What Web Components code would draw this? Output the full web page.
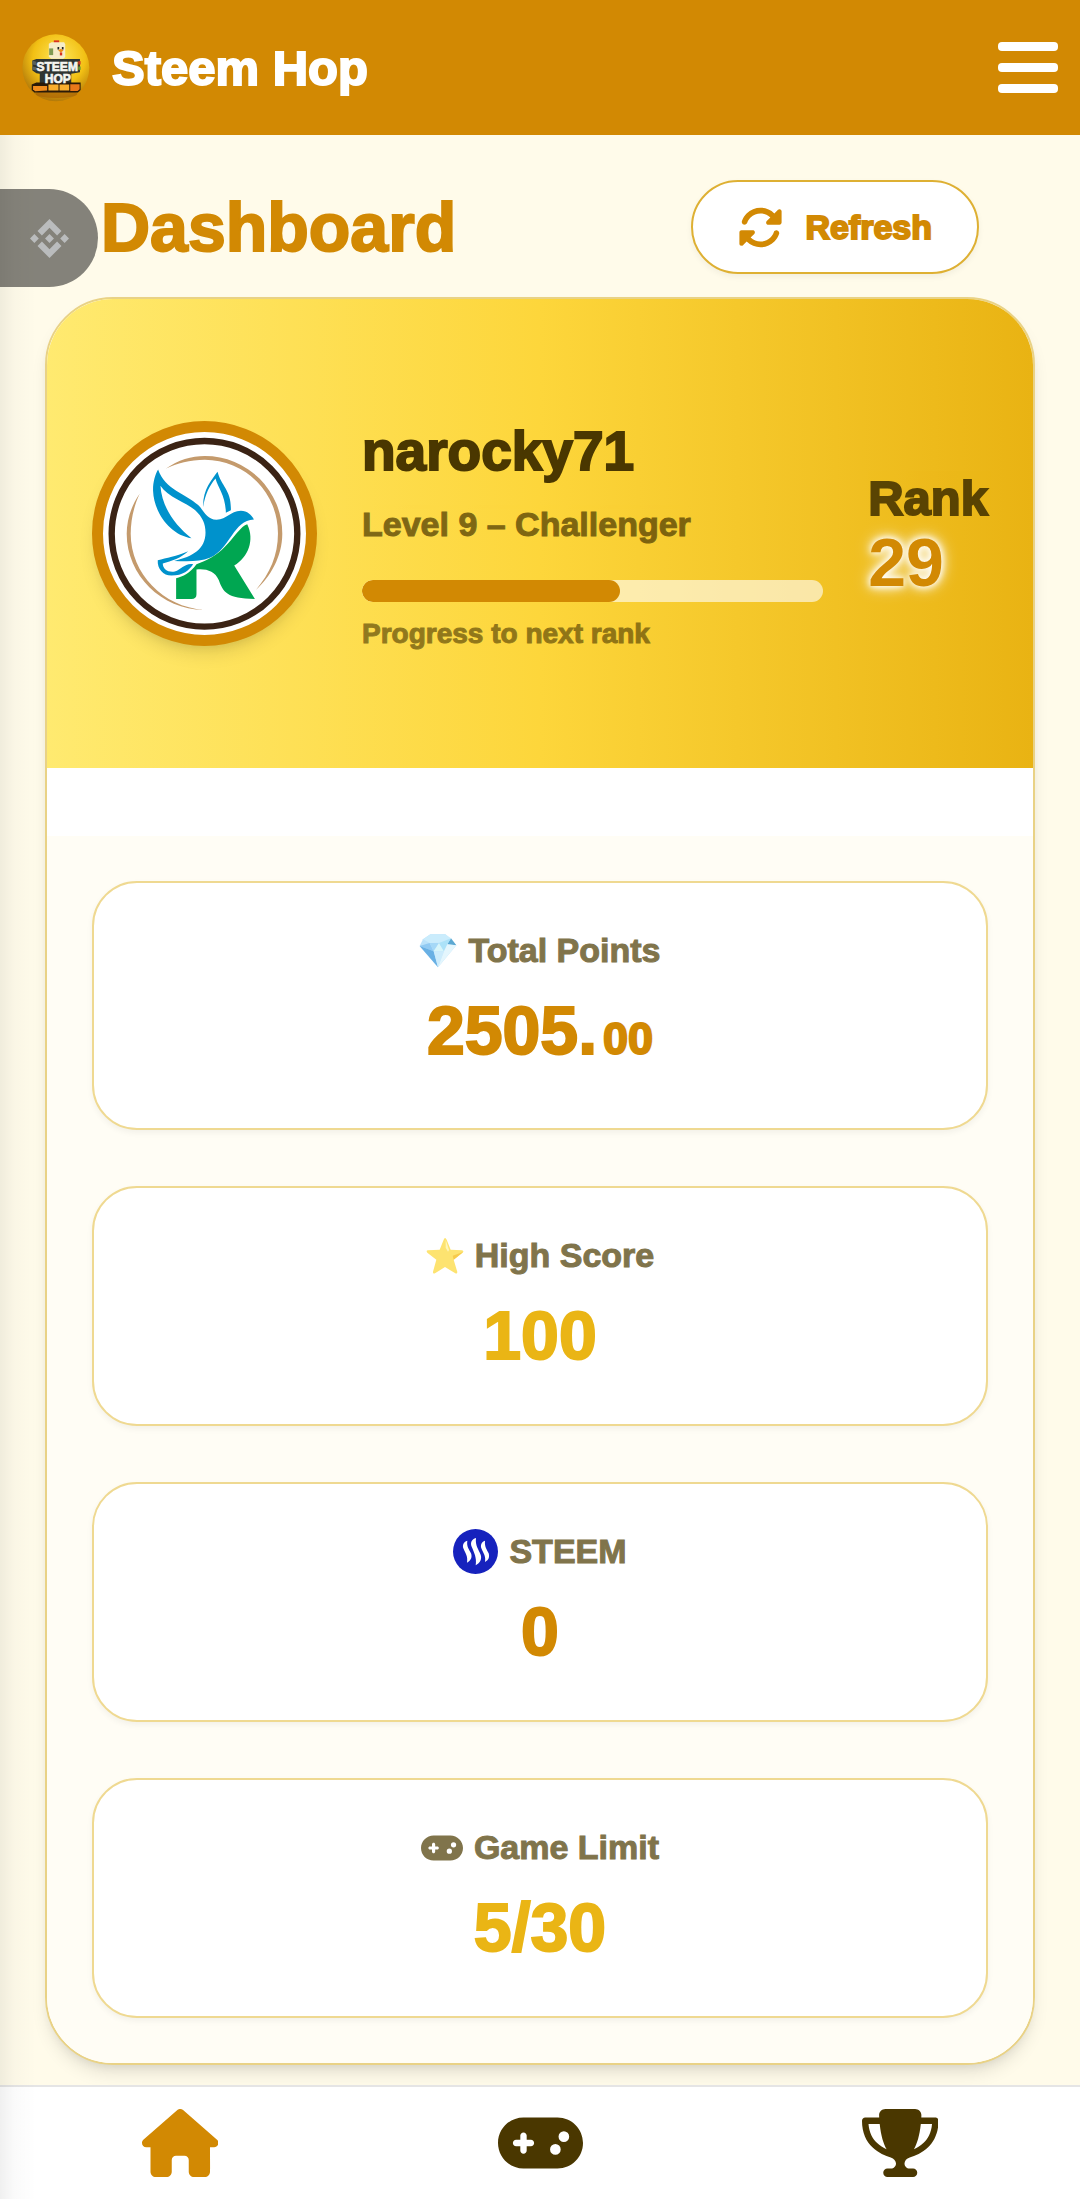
<!DOCTYPE html>
<html lang="en">
<head>
<meta charset="UTF-8">
<meta name="viewport" content="width=device-width, initial-scale=1">
<title>Steem Hop</title>
<style>
    :root {
        --primary: #d28903;
        --gold: #eab515;
        --dark: #4a3700;
        --page: #fffbea;
        --line: #efd991;
    }
    body {
        margin: 0;
        background: var(--page);
        color: var(--dark);
        font-family: "Liberation Sans", Arial, sans-serif;
        font-weight: 700;
    }
</style>
</head>
<body>
<hop-app>
    <hop-header slot="header" name="Steem Hop"></hop-header>
    <hop-drawer slot="drawer"></hop-drawer>
    <hop-title-bar>Dashboard</hop-title-bar>
    <hop-panel>
        <hop-profile slot="profile" progress="56">
            <hop-avatar slot="avatar"></hop-avatar>
            <span slot="name">narocky71</span>
            <span slot="level">Level 9 – Challenger</span>
            <span slot="rank">29</span>
        </hop-profile>
        <hop-stat icon="diamond" label="Total Points" value="2505." fraction="00"></hop-stat>
        <hop-stat icon="star" label="High Score" value="100" tone="gold"></hop-stat>
        <hop-stat icon="steem" label="STEEM" value="0"></hop-stat>
        <hop-stat icon="gamepad" label="Game Limit" value="5/30" tone="gold"></hop-stat>
    </hop-panel>
    <hop-nav slot="nav"></hop-nav>
</hop-app>

<script>
// Shared icon set, every icon is inline SVG
const ICONS = {
    refresh: `<svg viewBox="0 0 512 512"><path fill="currentColor" d="M142.9 142.9c62.2-62.2 162.7-62.5 225.3-1L327 183c-6.9 6.9-8.9 17.2-5.2 26.2s12.5 14.8 22.2 14.8H472c13.3 0 24-10.7 24-24V72c0-9.7-5.8-18.5-14.8-22.2s-19.3-1.7-26.2 5.2L413.4 96.6c-87.6-86.5-228.7-86.2-315.8 1C73.2 122 55.6 150.7 44.8 181.4c-5.9 16.7 2.9 34.9 19.5 40.8s34.9-2.9 40.8-19.5c7.7-21.8 20.2-42.3 37.8-59.8zM16 312V440c0 9.7 5.8 18.5 14.8 22.2s19.3 1.7 26.2-5.2l41.6-41.6c87.6 86.5 228.7 86.2 315.8-1c24.4-24.4 42.1-53.1 52.9-83.7c5.9-16.7-2.9-34.9-19.5-40.8s-34.9 2.9-40.8 19.5c-7.7 21.8-20.2 42.3-37.8 59.8c-62.2 62.2-162.7 62.5-225.3 1L185 329c6.9-6.9 8.9-17.2 5.2-26.2s-12.5-14.8-22.2-14.8H40c-13.3 0-24 10.7-24 24z"/></svg>`,
    home: `<svg viewBox="0 0 576 512"><path fill="currentColor" d="M575.8 255.5c0 18-15 32.1-32 32.1h-32l.7 160.2c0 2.7-.2 5.4-.5 8.1V472c0 22.1-17.9 40-40 40H392c-22.1 0-40-17.9-40-40V384c0-17.7-14.3-32-32-32H256c-17.7 0-32 14.3-32 32v88c0 22.1-17.9 40-40 40H104c-22.1 0-40-17.9-40-40V287.6H32c-18 0-32-14-32-32.1c0-9 3-17 10-24L266.4 8c7-7 15-8 22-8s15 2 21 7L564.8 231.5c8 7 12 15 11 24z"/></svg>`,
    gamepad: `<svg viewBox="0 0 640 512"><path fill="currentColor" fill-rule="evenodd" d="M192 64C86 64 0 150 0 256S86 448 192 448H448c106 0 192-86 192-192s-86-192-192-192H192zM496 168a40 40 0 1 1 0 80 40 40 0 1 1 0-80zM392 304a40 40 0 1 1 80 0 40 40 0 1 1 -80 0zM168 200c0-13.3 10.7-24 24-24s24 10.7 24 24v32h32c13.3 0 24 10.7 24 24s-10.7 24-24 24H216v32c0 13.3-10.7 24-24 24s-24-10.7-24-24V280H136c-13.3 0-24-10.7-24-24s10.7-24 24-24h32V200z"/></svg>`,
    trophy: `<svg viewBox="0 0 576 512"><path fill="currentColor" d="M400 0H176c-26.5 0-48.1 21.8-47.1 48.2c.2 5.3 .4 10.6 .7 15.8H24C10.7 64 0 74.7 0 88c0 92.6 33.5 157 78.5 200.7c44.3 43.1 98.3 64.8 138.1 75.8c23.4 6.5 39.4 26 39.4 45.6c0 20.9-17 37.9-37.9 37.9H192c-17.7 0-32 14.3-32 32s14.3 32 32 32H384c17.7 0 32-14.3 32-32s-14.3-32-32-32H357.9C337 448 320 431 320 410.1c0-19.6 15.9-39.2 39.4-45.6c39.9-11 93.9-32.7 138.2-75.8C542.5 245 576 180.6 576 88c0-13.3-10.7-24-24-24H446.4c.3-5.2 .5-10.4 .7-15.8C448.1 21.8 426.5 0 400 0zM48.9 112h84.4c9.1 90.1 29.2 150.3 51.9 190.6c-24.9-11-50.8-26.5-73.2-48.3c-32-31.1-58-76-63-142.3zM464.1 254.3c-22.4 21.8-48.3 37.3-73.2 48.3c22.7-40.3 42.8-100.5 51.9-190.6h84.4c-5.1 66.3-31.1 111.2-63 142.3z"/></svg>`,
    coin: `<svg viewBox="0 0 126.6 126.6"><path fill="currentColor" d="M38.7 53.2l24.6-24.6 24.6 24.6 14.3-14.3L63.3 0l-38.9 38.9zM0 63.3L14.3 49l14.3 14.3-14.3 14.3zM38.7 73.4L63.3 98l24.6-24.6 14.3 14.3-38.9 38.9-38.9-38.9zM98 63.3L112.3 49l14.3 14.3-14.3 14.3zM77.8 63.3L63.3 48.8 48.8 63.3l14.5 14.5z"/></svg>`,
    diamond: `<svg viewBox="0 0 114 114">
        <path fill="#9fd6f9" d="M34 7H79L112 40 57 106 2 42 12 22Z"/>
        <path fill="#b4e4fb" d="M34 7H79L96 19 75 32 32 33 12 22Z"/>
        <path fill="#63b5ee" d="M2 42L32 33 44 58Z"/>
        <path fill="#2b8fd9" d="M2 42L44 58 57 106Z"/>
        <path fill="#1684c0" d="M96 19L112 40 85 37Z"/>
        <path fill="#7fc8f4" d="M32 33H60L44 58Z"/>
        <path fill="#c7f1f8" d="M60 33L75 58H44Z"/>
        <path fill="#8ad7f6" d="M60 33L96 19 85 37 75 58Z"/>
        <path fill="#b9e5fc" d="M44 58H75L57 106Z"/>
        <path fill="#d9f3fd" d="M85 37L112 40 57 106 75 58Z"/>
    </svg>`,
    star: `<svg viewBox="0 0 114 114">
        <path fill="#fdd835" d="M57 3Q60 3 62 8L74 38 108 40Q115 42 110 47L83 68 94 105Q94 111 88 109L57 90 27 109Q20 112 21 104L31 68 4 47Q-1 41 6 40L41 38 53 8Q55 3 57 3Z"/>
        <path fill="#fff39a" d="M59 8L69 39 66 44 59 32Z"/>
        <path fill="#f4b400" d="M111 45L83 68 80 56Z"/>
    </svg>`,
    steem: `<svg viewBox="342 150 135 135">
        <circle cx="409.5" cy="217.5" r="67.5" fill="#1622bd"/>
        <g fill="#fff">
            <path d="M385 185C373 189 369 199 374 210C380 224 387 232 384 251C397 244 400 234 396 223C391 211 382 204 385 185Z"/>
            <path d="M411 177C398 181 393 191 398 203C405 220 414 236 410 259C424 251 429 240 425 227C419 211 408 200 411 177Z"/>
            <path d="M438 185C427 189 423 199 428 210C434 224 441 232 438 249C450 243 452 234 449 223C444 211 436 204 438 185Z"/>
        </g>
    </svg>`
};

class HopElement extends HTMLElement {
    constructor() {
        super();
        this.attachShadow({ mode: 'open' });
    }

    connectedCallback() {
        this.shadowRoot.innerHTML = this.render();
    }
}

class HopApp extends HopElement {
    render() {
        return `
            <style>
                :host {
                    display: flex;
                    flex-direction: column;
                    min-height: 100vh;
                    position: relative;
                }
                main {
                    flex: 1;
                    padding: 45px 45px 20px;
                }
            </style>
            <slot name="header"></slot>
            <slot name="drawer"></slot>
            <main><slot></slot></main>
            <slot name="nav"></slot>
        `;
    }
}

class HopHeader extends HopElement {
    render() {
        return `
            <style>
                :host {
                    display: block;
                    position: relative;
                    z-index: 3;
                    background: var(--primary);
                }
                header {
                    display: flex;
                    align-items: center;
                    gap: 22px;
                    height: 135px;
                    padding: 0 22px;
                    box-sizing: border-box;
                }
                a {
                    display: flex;
                    align-items: center;
                    gap: 22px;
                    color: #fff;
                    font-size: 49px;
                    line-height: 68px;
                    text-decoration: none;
                    -webkit-text-stroke: 2px currentColor;
                }
                a svg {
                    width: 68px;
                    height: 68px;
                    -webkit-text-stroke: 0;
                }
                button {
                    display: flex;
                    flex-direction: column;
                    gap: 12px;
                    margin-left: auto;
                    padding: 0;
                    border: 0;
                    background: none;
                }
                button i {
                    width: 60px;
                    height: 9px;
                    border-radius: 4px;
                    background: #fff;
                }
            </style>
            <header>
                <a href="#">
                    <svg viewBox="39 41 203 203" aria-hidden="true">
                        <defs>
                            <radialGradient id="ball" cx=".55" cy=".35" r=".65">
                                <stop offset="0" stop-color="#ffe75a"/>
                                <stop offset=".6" stop-color="#f2c014"/>
                                <stop offset="1" stop-color="#b37a0a"/>
                            </radialGradient>
                        </defs>
                        <circle cx="140" cy="142" r="100" fill="url(#ball)"/>
                        <ellipse cx="142" cy="220" rx="62" ry="12" fill="#a85f05" opacity=".6"/>
                        <path fill="#d9301e" d="M134 60h16v10h-16z"/>
                        <path fill="#f6ecc8" d="M119 70l8-4h38l3 6v38l-6 5h-36l-7-6z"/>
                        <path fill="#7f9a52" d="M120 84h12v20h-12z"/>
                        <path fill="#222" d="M145 80h5v7h-5zM158 80h5v7h-5z"/>
                        <path fill="#ef8a17" d="M147 90l8-5 8 5-8 6z"/>
                        <path fill="#d9301e" d="M152 96h7v9h-7z"/>
                        <path fill="#2f3532" d="M70 120l12-4h130v39l-26 5v32H92v-32l-10-2-12-8z"/>
                        <path fill="#59615c" d="M70 120l12 4v10l-12-2zM70 138l12 2v10l-12-2z"/>
                        <path fill="#cf3a20" d="M207 122h7v10h-7z"/>
                        <path fill="#5f9a35" d="M207 138h7v10h-7z"/>
                        <path fill="#2a1a08" d="M68 192l14-6h132v22l-8 8H76l-8-8z"/>
                        <path fill="#f08c1d" d="M72 196h42v14l-36 2-6-6z"/>
                        <path fill="#fbae2c" d="M118 192h30v18h-30zM151 192h29v18h-29z"/>
                        <path fill="#e9781a" d="M183 191h28v15l-6 5h-22z"/>
                        <g fill="#f4f4f0" stroke="#f4f4f0" stroke-width="2" font-size="36" text-anchor="middle">
                            <text x="144" y="152">STEEM</text>
                            <text x="146" y="187">HOP</text>
                        </g>
                    </svg>
                    <span>${this.getAttribute('name')}</span>
                </a>
                <button type="button" aria-label="Menu"><i></i><i></i><i></i></button>
            </header>
        `;
    }
}

// Edge drawer that lies over the page, with its tab
class HopDrawer extends HopElement {
    render() {
        return `
            <style>
                :host {
                    position: absolute;
                    z-index: 2;
                    top: 135px;
                    bottom: 0;
                    left: 0;
                    width: 36px;
                    background: linear-gradient(90deg, rgba(0, 0, 0, .06), rgba(0, 0, 0, .02) 40%, transparent);
                }
                button {
                    display: flex;
                    align-items: center;
                    justify-content: center;
                    width: 98px;
                    height: 98px;
                    margin-top: 54px;
                    padding: 0;
                    border: 0;
                    border-radius: 0 49px 49px 0;
                    background: rgba(10, 10, 10, .5);
                    color: #babcbd;
                }
                svg {
                    width: 39px;
                    height: 39px;
                }
            </style>
            <button type="button" aria-label="Open drawer">${ICONS.coin}</button>
        `;
    }
}

class HopTitleBar extends HopElement {
    render() {
        return `
            <style>
                :host {
                    display: flex;
                    align-items: center;
                    justify-content: space-between;
                    padding: 0 56px 23px;
                    color: var(--primary);
                }
                h1 {
                    margin: 0;
                    font-size: 68px;
                    line-height: 94px;
                    -webkit-text-stroke: 2px currentColor;
                }
                button {
                    display: flex;
                    align-items: center;
                    gap: 22px;
                    height: 94px;
                    padding: 0 45px;
                    border: 2px solid #deb033;
                    border-radius: 47px;
                    background: #fff;
                    box-shadow: 0 3px 6px rgba(0, 0, 0, .05);
                    color: inherit;
                    font: inherit;
                    font-size: 34px;
                    -webkit-text-stroke: 2px currentColor;
                }
                svg {
                    width: 45px;
                    height: 45px;
                }
            </style>
            <h1><slot></slot></h1>
            <button type="button">${ICONS.refresh}<span>Refresh</span></button>
        `;
    }
}

class HopPanel extends HopElement {
    render() {
        return `
            <style>
                :host {
                    display: block;
                    border: 2px solid #e9d285;
                    border-radius: 68px;
                    background: #fff;
                    overflow: hidden;
                    box-shadow: 0 11px 17px -3px rgba(0, 0, 0, .1), 0 6px 11px -6px rgba(0, 0, 0, .1);
                }
                section {
                    display: grid;
                    gap: 56px;
                    margin-top: 68px;
                    padding: 45px;
                    background: #fffdf5;
                }
            </style>
            <slot name="profile"></slot>
            <section><slot></slot></section>
        `;
    }
}

class HopProfile extends HopElement {
    render() {
        return `
            <style>
                :host {
                    display: flex;
                    align-items: center;
                    gap: 45px;
                    padding: 116px 45px;
                    background: linear-gradient(90deg, #ffea70, #fdd63b 50%, #e9b313);
                }
                .info {
                    flex: 1;
                }
                h2, p {
                    margin: 0;
                }
                h2 {
                    font-size: 55px;
                    line-height: 72px;
                    -webkit-text-stroke: 2px currentColor;
                }
                .level {
                    margin-top: 12px;
                    font-size: 34px;
                    line-height: 50px;
                    opacity: .7;
                    -webkit-text-stroke: 1px currentColor;
                }
                .bar {
                    height: 22px;
                    margin: 31px 0 14px;
                    border-radius: 11px;
                    background: rgba(255, 255, 255, .6);
                    overflow: hidden;
                }
                .bar div {
                    width: ${this.getAttribute('progress')}%;
                    height: 100%;
                    border-radius: 11px;
                    background: var(--primary);
                }
                .hint {
                    font-size: 28px;
                    line-height: 36px;
                    opacity: .6;
                    -webkit-text-stroke: 1px currentColor;
                }
                .rank span {
                    display: block;
                    font-size: 49px;
                    line-height: 56px;
                    opacity: .9;
                    -webkit-text-stroke: 2px currentColor;
                }
                .rank strong {
                    display: block;
                    color: var(--primary);
                    font-size: 68px;
                    line-height: 72px;
                    text-shadow: 0 0 6px #fff, 0 0 11px #fff, 0 0 17px rgba(255, 255, 255, .8);
                }
            </style>
            <slot name="avatar"></slot>
            <div class="info">
                <h2><slot name="name"></slot></h2>
                <p class="level"><slot name="level"></slot></p>
                <div class="bar"><div></div></div>
                <p class="hint">Progress to next rank</p>
            </div>
            <div class="rank"><span>Rank</span><strong><slot name="rank"></slot></strong></div>
        `;
    }
}

class HopAvatar extends HopElement {
    render() {
        return `
            <style>
                :host {
                    display: block;
                    flex: none;
                    width: 203px;
                    height: 203px;
                    border: 11px solid var(--primary);
                    border-radius: 50%;
                    background: #fff;
                    box-shadow: 0 11px 17px -3px rgba(0, 0, 0, .1), 0 6px 11px -6px rgba(0, 0, 0, .1);
                }
                svg {
                    display: block;
                    width: 100%;
                    height: 100%;
                }
            </style>
            <svg viewBox="190 426 608 608" role="img" aria-label="Avatar">
                <circle cx="494" cy="731" r="278" fill="none" stroke="#3b2314" stroke-width="19"/>
                <g fill="#c49a6c">
                    <path d="M378 536C415 510 455 498 495 498A232 232 0 0 1 727 731C727 800 690 862 648 899C690 850 714 795 714 731A220 220 0 0 0 495 509C450 509 412 520 378 536Z"/>
                    <path d="M300 611C275 645 261 690 261 731C261 855 365 958 492 959C370 950 273 850 273 731C273 690 283 645 300 611Z"/>
                </g>
                <g fill="#0092cc">
                    <path d="M355 538C375 598 440 612 475 645C492 661 500 688 530 689C562 688 570 663 603 662C622 662 635 675 642 688C580 690 572 775 510 803C480 815 440 814 403 812C460 800 497 775 497 728C497 700 487 680 467 661C440 637 385 622 362 587C366 650 405 705 455 744C390 735 342 665 340 603C339 580 345 555 355 538Z"/>
                    <path d="M533 545C515 570 488 600 490 651C496 610 510 585 527 565C535 595 557 615 558 668L573 660C575 600 545 590 533 545Z"/>
                    <path d="M445 783C410 798 380 803 354 810C352 835 370 856 395 856C430 856 448 840 460 822C435 818 425 838 405 844C385 848 369 836 369 820C395 812 425 803 445 783Z"/>
                </g>
                <path fill="#00a651" d="M622 702C605 705 580 745 555 770C530 797 500 812 470 822C450 850 430 858 409 864V926H455C465 926 470 922 470 912V838C500 835 525 843 537 870C550 905 560 925 645 926L583 826C625 800 645 750 622 702Z"/>
            </svg>
        `;
    }
}

class HopStat extends HopElement {
    render() {
        const fraction = this.getAttribute('fraction');
        const icon = this.getAttribute('icon');
        return `
            <style>
                :host {
                    display: block;
                    padding: 45px;
                    border: 2px solid var(--line);
                    border-radius: 45px;
                    background: #fff;
                    box-shadow: 0 3px 6px rgba(0, 0, 0, .05);
                }
                .label, .value {
                    display: flex;
                    justify-content: center;
                }
                .label {
                    align-items: center;
                    gap: 11px;
                    color: #80744b;
                    font-size: 34px;
                    line-height: 45px;
                    -webkit-text-stroke: 1px currentColor;
                }
                svg {
                    width: 38px;
                    height: 38px;
                }
                .diamond svg, .star svg {
                    opacity: .7;
                }
                .steem svg {
                    width: 45px;
                    height: 45px;
                }
                .gamepad svg {
                    width: 42px;
                    height: 34px;
                }
                .value {
                    align-items: baseline;
                    gap: 6px;
                    margin-top: 13px;
                    color: var(--primary);
                    font-size: 68px;
                    line-height: 88px;
                    -webkit-text-stroke: 2px currentColor;
                }
                :host([tone="gold"]) .value {
                    color: var(--gold);
                }
                :host([fraction]) .value {
                    padding-bottom: 9px;
                }
                small {
                    font-size: 45px;
                    line-height: 45px;
                }
            </style>
            <div class="label ${icon}">${ICONS[icon]}<span>${this.getAttribute('label')}</span></div>
            <div class="value"><span>${this.getAttribute('value')}</span>${fraction ? `<small>${fraction}</small>` : ''}</div>
        `;
    }
}

class HopNav extends HopElement {
    render() {
        return `
            <style>
                :host {
                    display: block;
                    position: relative;
                    z-index: 1;
                    border-top: 2px solid #e5e5e5;
                    background: #fff;
                }
                nav {
                    display: grid;
                    grid-template-columns: repeat(3, 1fr);
                    height: 112px;
                }
                a {
                    display: flex;
                    align-items: center;
                    justify-content: center;
                    color: var(--dark);
                }
                a.active {
                    color: var(--primary);
                }
                svg {
                    height: 68px;
                }
            </style>
            <nav>
                <a class="active" href="#home" aria-label="Home">${ICONS.home}</a>
                <a href="#play" aria-label="Play">${ICONS.gamepad}</a>
                <a href="#ranking" aria-label="Ranking">${ICONS.trophy}</a>
            </nav>
        `;
    }
}

customElements.define('hop-app', HopApp);
customElements.define('hop-header', HopHeader);
customElements.define('hop-drawer', HopDrawer);
customElements.define('hop-title-bar', HopTitleBar);
customElements.define('hop-panel', HopPanel);
customElements.define('hop-profile', HopProfile);
customElements.define('hop-avatar', HopAvatar);
customElements.define('hop-stat', HopStat);
customElements.define('hop-nav', HopNav);
</script>
</body>
</html>
